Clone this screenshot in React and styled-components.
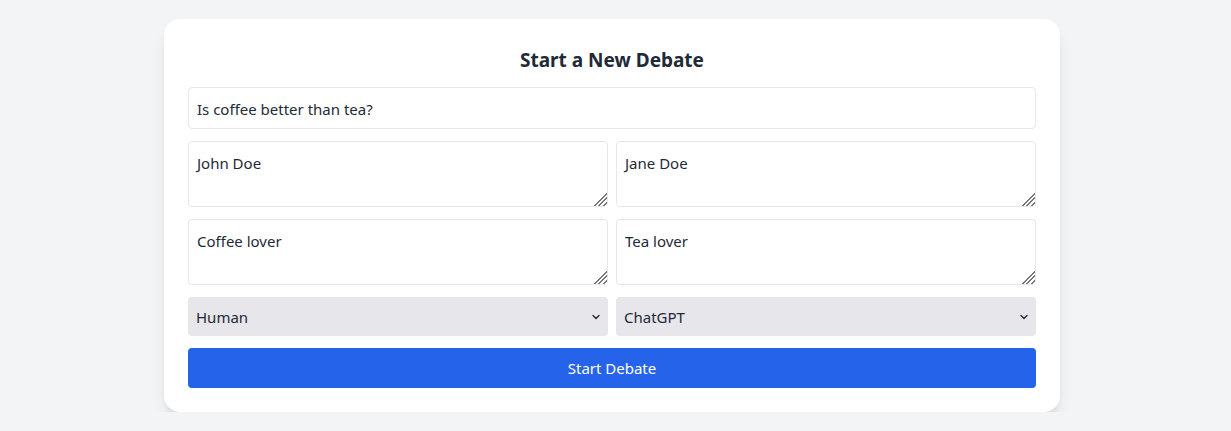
import React from "react";
import styled, { createGlobalStyle } from "styled-components";

const Global = createGlobalStyle`
  * { box-sizing: border-box; }
  body {
    margin: 0;
    background: #f3f4f6;
    font-family: "Noto Sans", "Open Sans", sans-serif;
    color: #1f2937;
  }
`;

const Page = styled.div`
  display: flex;
  justify-content: center;
  padding: 19px 7px 0 0;
`;

const Card = styled.form`
  width: 896px;
  background: #fff;
  border-radius: 16px;
  padding: 24px;
  box-shadow: 0 10px 15px -3px rgba(0,0,0,0.1), 0 4px 6px -4px rgba(0,0,0,0.1);
  display: flex;
  flex-direction: column;
  gap: 12px;
`;

const Title = styled.h2`
  margin: 3px 0 1px;
  font-size: 19px;
  line-height: 28px;
  font-weight: 700;
  text-align: center;
  color: #1f2937;
`;

const field = `
  font-family: "Noto Sans", "Open Sans", sans-serif;
  font-size: 15px;
  line-height: 24px;
  color: #1f2937;
  padding: 8px;
  border-radius: 4px;
  width: 100%;
  outline: none;
`;

const Input = styled.input`
  ${field}
  border: 1px solid #e5e7eb;
  background: #fff;
  padding-top: 9px;
  padding-bottom: 7px;
`;

const TextArea = styled.textarea`
  ${field}
  border: 1px solid #e5e7eb;
  background: #fff;
  height: 66px;
  display: block;
  padding-top: 9px;
  padding-bottom: 7px;
  &::-webkit-scrollbar {
    width: 14px;
    height: 14px;
    background: transparent;
  }
  &::-webkit-resizer {
    background:
      linear-gradient(135deg, #fff 0 50%, transparent 50%),
      repeating-linear-gradient(135deg, #fff 0 2px, #777 2px 3.2px);
  }
`;

const Row = styled.div`
  display: grid;
  grid-template-columns: 1fr 1fr;
  gap: 8px;
`;

const SelectWrap = styled.div`
  position: relative;
`;

const Select = styled.select`
  ${field}
  appearance: none;
  -webkit-appearance: none;
  border: none;
  background-color: #e7e7eb;
  height: 39px;
  padding-right: 28px;
`;

const Chevron = styled.svg`
  position: absolute;
  right: 7px;
  top: 50%;
  transform: translateY(-50%);
  width: 10px;
  height: 10px;
  pointer-events: none;
`;

const Button = styled.button`
  font-family: "Noto Sans", "Open Sans", sans-serif;
  font-size: 15px;
  line-height: 24px;
  height: 40px;
  border: none;
  border-radius: 4px;
  background: #2563eb;
  color: #fff;
  cursor: pointer;
`;

function Dropdown({ value }) {
  return (
    <SelectWrap>
      <Select defaultValue={value}>
        <option>Human</option>
        <option>ChatGPT</option>
      </Select>
      <Chevron viewBox="0 0 10 10">
        <path d="M2 3.5 L5 6.5 L8 3.5" fill="none" stroke="#1f2937" strokeWidth="1.4" strokeLinecap="round" strokeLinejoin="round" />
      </Chevron>
    </SelectWrap>
  );
}

export default function App() {
  return (
    <>
      <Global />
      <Page>
        <Card onSubmit={(e) => e.preventDefault()}>
          <Title>Start a New Debate</Title>
          <Input defaultValue="Is coffee better than tea?" />
          <Row>
            <TextArea defaultValue="John Doe" />
            <TextArea defaultValue="Jane Doe" />
          </Row>
          <Row>
            <TextArea defaultValue="Coffee lover" />
            <TextArea defaultValue="Tea lover" />
          </Row>
          <Row>
            <Dropdown value="Human" />
            <Dropdown value="ChatGPT" />
          </Row>
          <Button type="submit">Start Debate</Button>
        </Card>
      </Page>
    </>
  );
}
